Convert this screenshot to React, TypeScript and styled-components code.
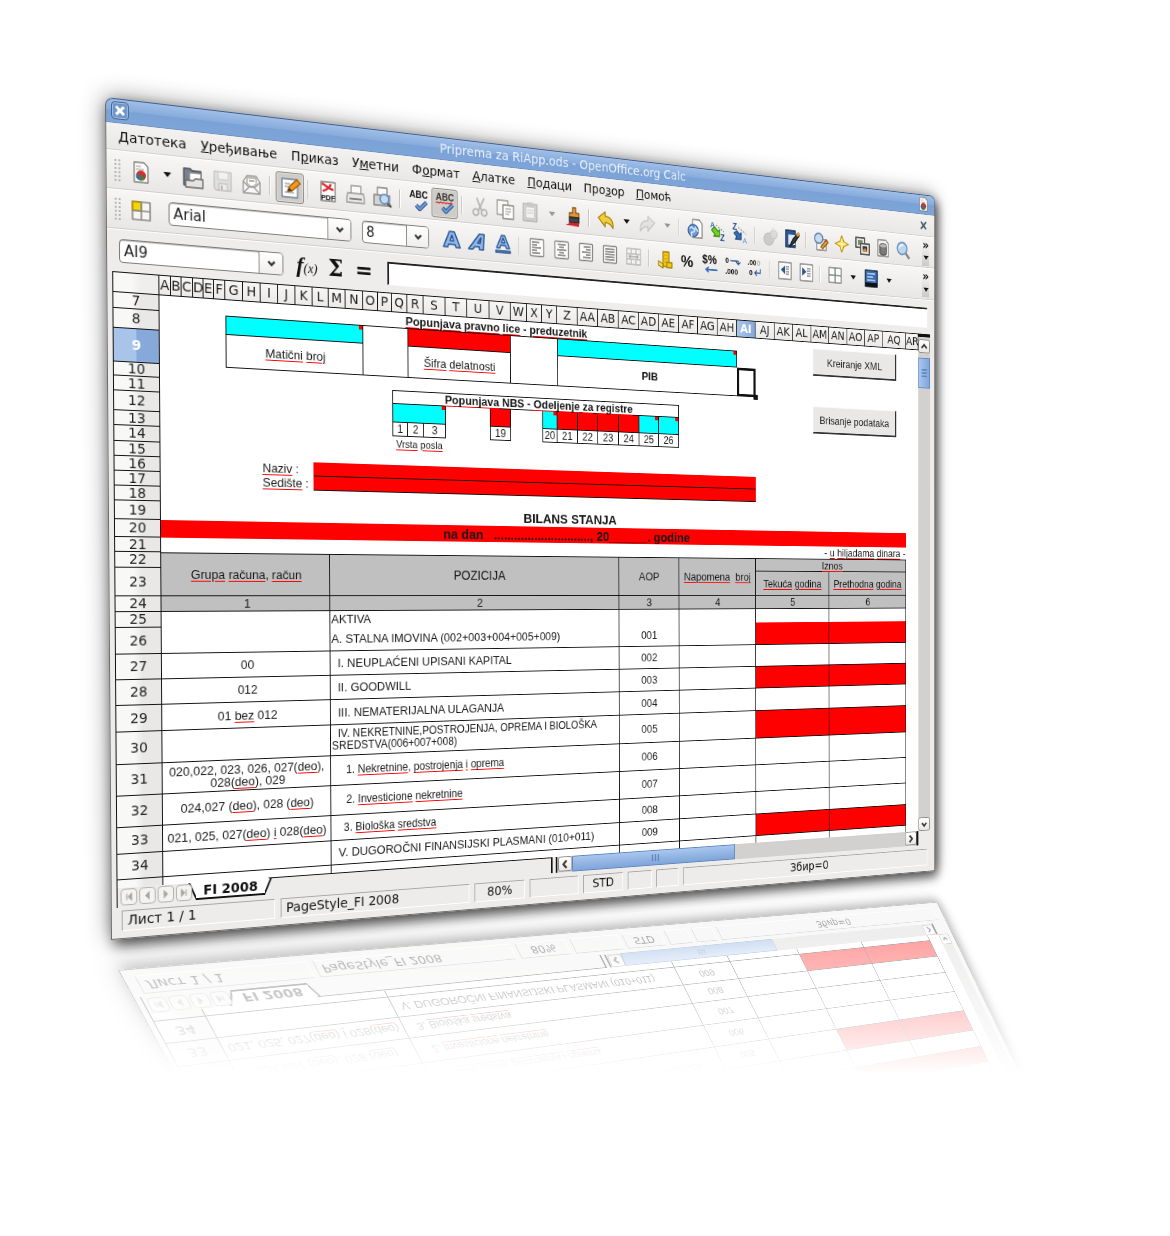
import React, { Fragment, ReactNode } from "react";
import styled, { createGlobalStyle, css } from "styled-components";

/* ---------- perspective ---------- */

type Point = [number, number];

const WINDOW_WIDTH = 1040;
const WINDOW_HEIGHT = 850;

/* Builds the matrix3d that carries a flat box to four corners (tl, tr, br, bl). */
function project(w: number, h: number, tl: Point, tr: Point, br: Point, bl: Point) {
  const sx = tl[0] - tr[0] + br[0] - bl[0];
  const sy = tl[1] - tr[1] + br[1] - bl[1];
  const dx1 = tr[0] - br[0];
  const dx2 = bl[0] - br[0];
  const dy1 = tr[1] - br[1];
  const dy2 = bl[1] - br[1];
  const den = dx1 * dy2 - dx2 * dy1;
  const g = (sx * dy2 - dx2 * sy) / den;
  const k = (dx1 * sy - sx * dy1) / den;
  const m = [
    (tr[0] - tl[0] + g * tr[0]) / w, (tr[1] - tl[1] + g * tr[1]) / w, 0, g / w,
    (bl[0] - tl[0] + k * bl[0]) / h, (bl[1] - tl[1] + k * bl[1]) / h, 0, k / h,
    0, 0, 1, 0,
    tl[0], tl[1], 0, 1,
  ];
  return `matrix3d(${m.map((n) => n.toFixed(9)).join(",")})`;
}

const FRONT = project(WINDOW_WIDTH, WINDOW_HEIGHT, [105, 97], [935, 196], [935, 871], [111, 940]);
const MIRROR = project(WINDOW_WIDTH, WINDOW_HEIGHT, [497, 1671], [1174, 1392], [937, 902], [118, 970]);

/* ---------- base ---------- */

const UI = `"DejaVu Sans", Verdana, sans-serif`;
const DOC = `"Liberation Sans", Arial, sans-serif`;

const Global = createGlobalStyle`
  *, *::before, *::after { box-sizing: border-box; }
  body { margin: 0; background: #fff; }
  button, input, select { font: inherit; color: inherit; margin: 0; }
`;

const Stage = styled.main`
  position: relative;
  min-height: 100vh;
  overflow: hidden;
  background: #fff;
`;

const ReflectionLayer = styled.div`
  position: absolute;
  inset: 0;
  overflow: hidden;
  pointer-events: none;
  mask-image: linear-gradient(to bottom, rgba(0, 0, 0, 0.36) 940px, rgba(0, 0, 0, 0.18) 1015px, transparent 1074px);
`;

const Frame = styled.section<{ $matrix: string; $mirrored?: boolean }>`
  position: relative;
  display: flex;
  flex-direction: column;
  justify-content: flex-end;
  width: ${WINDOW_WIDTH}px;
  min-height: ${WINDOW_HEIGHT}px;
  transform: ${(p) => p.$matrix};
  transform-origin: 0 0;
  overflow: ${(p) => (p.$mirrored ? "visible" : "hidden")};
  background: #edeceb;
  border-radius: 8px 8px 0 0;
  font-family: ${UI};
  font-size: 13px;
  color: #111;
  box-shadow: 0 0 24px rgba(0, 0, 0, 0.45), 4px 6px 14px rgba(0, 0, 0, 0.6);
  &::after {
    content: "";
    position: absolute;
    inset: 0;
    border: 1px solid #6d6a66;
    border-top-color: #3f5f8d;
    border-radius: 8px 8px 0 0;
    pointer-events: none;
  }
`;

/* ---------- title and menu ---------- */

const TitleBar = styled.header`
  display: grid;
  grid-template-columns: 24px 1fr 24px;
  align-items: center;
  height: 25px;
  padding: 0 4px 0 6px;
  background: linear-gradient(#a3c0e8, #86abdc 50%, #7ba2d6 52%, #7ea4d8);
  border-bottom: 1px solid #6f92c2;
`;

const TitleText = styled.h1`
  margin: 0;
  font-size: 14px;
  font-weight: 400;
  line-height: 16px;
  text-align: center;
  color: #e9f0fa;
`;

const PlainButton = styled.button`
  display: grid;
  place-items: center;
  padding: 0;
  border: 0;
  background: none;
`;

const CloseButton = styled(PlainButton)`
  width: 18px;
  height: 18px;
  border: 1px solid #45638f;
  border-radius: 4px;
  background: #6e94c8;
  box-shadow: inset 0 0 0 1px #a6c1e6;
`;

const MenuBar = styled.nav`
  display: flex;
  align-items: center;
  gap: 1px;
  height: 27px;
  padding: 0 8px 0 6px;
  background: linear-gradient(#f3f2f1, #e9e8e6);
  border-bottom: 1px solid #d2d0cd;
`;

const MenuItem = styled(PlainButton)`
  display: block;
  padding: 0 7px;
  font-size: 14px;
  line-height: 18px;
  color: #111;
`;

const Spacer = styled.span`
  flex: 1;
`;

/* ---------- toolbars ---------- */

const Toolbar = styled.div<{ $tall?: boolean }>`
  display: flex;
  align-items: center;
  height: ${(p) => (p.$tall ? 40 : 39)}px;
  padding-left: 8px;
  padding-right: 9px;
  background: linear-gradient(#f7f6f5, #e8e7e5);
  border-top: 1px solid #fff;
  border-bottom: 1px solid #cfcdca;
`;

const Grip = styled.span`
  width: 7px;
  height: 24px;
  margin-right: 5px;
  background-image: radial-gradient(#b9b6b2 1px, transparent 1px);
  background-size: 4px 4px;
`;

const ToolButton = styled(PlainButton)<{ $on?: boolean; $faded?: boolean }>`
  width: 31px;
  height: 32px;
  border-radius: 3px;
  opacity: ${(p) => (p.$faded ? 0.45 : 1)};
  ${(p) =>
    p.$on &&
    css`
      background: #cfccc8;
      border: 1px solid #8c8984;
      box-shadow: inset 0 0 0 1px #e0deda;
    `}
`;

const ArrowButton = styled(PlainButton)<{ $faded?: boolean }>`
  width: 23px;
  height: 24px;
  opacity: ${(p) => (p.$faded ? 0.4 : 1)};
`;

const Divider = styled.span`
  width: 2px;
  height: 20px;
  margin: 0 5px 0 4px;
  border-left: 1px solid #c4c1bd;
  border-right: 1px solid #fff;
`;

const Overflow = styled(PlainButton)`
  grid-template-rows: 16px 16px;
  width: 11px;
  height: 34px;
  font-size: 16px;
  font-weight: 700;
  line-height: 14px;
  background: linear-gradient(#f0efee 30%, #cbc9c5);
`;

const Combo = styled.div<{ $w: number; $gap: number }>`
  display: flex;
  width: ${(p) => p.$w}px;
  height: 24px;
  margin-left: ${(p) => p.$gap}px;
  border: 1px solid #7e7b77;
  border-radius: 4px;
  background: #fff;
  box-shadow: inset 0 1px 1px #bbb;
  overflow: hidden;
`;

const fieldCss = css`
  flex: 1;
  min-width: 0;
  padding: 0 4px;
  border: 0;
  outline: 0;
  background: transparent;
  font-size: 15px;
  line-height: 22px;
  color: #222;
`;

const ComboSelect = styled.select`
  ${fieldCss}
  appearance: none;
`;

const ComboInput = styled.input`
  ${fieldCss}
`;

const ComboArrow = styled.span`
  display: grid;
  place-items: center;
  width: 26px;
  border-left: 1px solid #8c8984;
  background: linear-gradient(#fff, #efeeec);
`;

const Group = styled.div`
  display: flex;
  align-items: center;
  margin-left: 11px;
`;

const FormulaBar = styled.div`
  display: flex;
  align-items: center;
  height: 43px;
  padding-right: 12px;
  background: #eeedec;
  border-top: 1px solid #fff;
`;

const FormulaActions = styled.div`
  display: flex;
  align-items: center;
  width: 117px;
  padding-left: 10px;
`;

const FormulaButton = styled(PlainButton)`
  width: 32px;
  height: 26px;
  font-family: "DejaVu Serif", serif;
  font-size: 24px;
  font-weight: 700;
  line-height: 24px;
  white-space: nowrap;
  em {
    font-family: "Liberation Serif", serif;
    font-size: 24px;
    line-height: 24px;
  }
  small {
    font-family: "Liberation Serif", serif;
    font-size: 14px;
    font-weight: 400;
    font-style: italic;
  }
`;

const FormulaInput = styled.input`
  ${fieldCss}
  height: 25px;
  border: 1px solid #fff;
  border-top: 2px solid #222;
  border-left: 2px solid #222;
  background: #fff;
`;

/* ---------- sheet ---------- */

const SheetArea = styled.div`
  display: flex;
  padding: 0 8px 0 6px;
`;

const SheetPane = styled.div`
  position: relative;
  flex: 1;
  min-width: 0;
  overflow: hidden;
  background: #fff;
`;

const Grid = styled.table`
  table-layout: fixed;
  width: 1008px;
  border-spacing: 0;
  font-family: ${DOC};
`;

const Row = styled.tr<{ $h: number }>`
  height: ${(p) => p.$h}px;
`;

const headCss = css<{ $on?: boolean }>`
  padding: 0;
  border: 0 solid #111;
  border-right-width: 1px;
  border-bottom-width: 1px;
  font-family: ${UI};
  font-size: 14px;
  font-weight: ${(p) => (p.$on ? 700 : 400)};
  line-height: 13px;
  text-align: center;
  color: ${(p) => (p.$on ? "#fff" : "#222")};
`;

const ColumnHead = styled.th<{ $on?: boolean }>`
  ${headCss}
  border-top: 1px solid #111;
  white-space: nowrap;
  background: ${(p) => (p.$on ? "linear-gradient(90deg, #a9c4ea, #86a9da)" : "linear-gradient(#f6f6f5, #eceae9)")};
`;

const Corner = styled.td`
  ${headCss}
  border-top: 1px solid #111;
  border-left: 1px solid #111;
  background: linear-gradient(90deg, #f8f8f7 40%, #efeeec 60%);
`;

const RowHead = styled.th<{ $on?: boolean; $open?: boolean }>`
  ${headCss}
  border-left-width: 1px;
  border-bottom-width: ${(p) => (p.$open ? 0 : 1)}px;
  background: ${(p) =>
    p.$on ? "linear-gradient(90deg, #a9c4ea 49%, #86a9da 51%)" : "linear-gradient(90deg, #f8f8f7 40%, #e9e8e6 60%)"};
`;

interface Look {
  fill?: string;
  sides?: string;
  bold?: boolean;
  size?: number;
  align?: "left" | "right";
  pad?: number;
  note?: boolean;
}

const Cell = styled.td<{ $look: Look }>`
  position: relative;
  padding: 0 1px 0 ${(p) => p.$look.pad ?? 1}px;
  border: 0 solid #111;
  ${(p) => (p.$look.sides?.includes("t") ? "border-top-width: 1px;" : "")}
  ${(p) => (p.$look.sides?.includes("r") ? "border-right-width: 1px;" : "")}
  ${(p) => (p.$look.sides?.includes("b") ? "border-bottom-width: 1px;" : "")}
  ${(p) => (p.$look.sides?.includes("l") ? "border-left-width: 1px;" : "")}
  background: ${(p) => p.$look.fill ?? "transparent"};
  font-size: ${(p) => p.$look.size ?? 13}px;
  font-weight: ${(p) => (p.$look.bold ? 700 : 400)};
  line-height: 13px;
  text-align: ${(p) => p.$look.align ?? "center"};
  white-space: pre;
  color: #181818;
  ${(p) =>
    p.$look.note &&
    css`
      &::after {
        content: "";
        position: absolute;
        top: 0;
        right: 0;
        width: 4px;
        height: 4px;
        background: #f00;
      }
    `}
`;

const CursorCell = styled.td`
  position: relative;
  padding: 0;
  border: 3px solid #111;
  &::after {
    content: "";
    position: absolute;
    right: -6px;
    bottom: -6px;
    width: 6px;
    height: 6px;
    background: #111;
  }
`;

const Misspelt = styled.span`
  text-decoration: underline 1px #f00;
  text-underline-offset: 2px;
`;

const SheetButton = styled.button<{ $top: number }>`
  position: absolute;
  top: ${(p) => p.$top}px;
  left: 849px;
  width: 125px;
  height: 33px;
  padding: 0;
  border: 1px solid #f8f8f8;
  border-right: 2px solid #333;
  border-bottom: 2px solid #333;
  background: #eae8e6;
  font-family: ${DOC};
  font-size: 13px;
  color: #222;
`;

/* ---------- scroll bars, tabs, status ---------- */

const VerticalScroll = styled.div`
  display: flex;
  flex-direction: column;
  width: 18px;
  padding-top: 3px;
  border-top: 4px solid #111;
  background: #d3d1cf;
`;

const ScrollButton = styled(PlainButton)`
  border: 1px solid #8c8984;
  border-radius: 3px;
  background: linear-gradient(#fff, #e9e8e6);
  width: 18px;
  height: 17px;
`;

const VerticalThumb = styled.span`
  display: grid;
  place-items: center;
  height: 38px;
  margin-top: 6px;
  border: 1px solid #5f86bf;
  background: linear-gradient(90deg, #a9c6ee, #7fa5da);
`;

const TabRow = styled.div`
  display: flex;
  height: 20px;
  padding: 0 26px 0 6px;
`;

const TabNav = styled.div`
  display: flex;
  gap: 2px;
  width: 78px;
  padding: 1px 0 0 3px;
  border-left: 1px solid #111;
`;

const TabNavButton = styled(PlainButton)`
  width: 17px;
  height: 17px;
  border: 1px solid #b3b0ac;
  border-radius: 4px;
  background: #f4f3f2;
`;

const SheetTab = styled.button`
  position: relative;
  width: 74px;
  height: 18px;
  margin: 0 4px;
  padding: 0;
  border: 0;
  border-bottom: 2px solid #111;
  background: #fff;
  font-size: 14px;
  font-weight: 700;
  line-height: 16px;
  &::before,
  &::after {
    content: "";
    position: absolute;
    z-index: -1;
    top: 0;
    bottom: -2px;
    width: 12px;
    background: #fff;
  }
  &::before {
    left: -4px;
    border-left: 2px solid #111;
    transform: skewX(24deg);
  }
  &::after {
    right: -4px;
    border-right: 2px solid #111;
    transform: skewX(-24deg);
  }
`;

const TabFiller = styled.span`
  flex: 1;
  height: 18px;
  border-top: 1px solid #111;
  border-right: 2px solid #111;
`;

const HorizontalScroll = styled.div`
  display: flex;
  width: 510px;
  height: 18px;
  margin-left: 4px;
  padding-left: 1px;
  border-left: 2px solid #111;
  border-right: 3px solid #111;
  background: #d3d1cf;
`;

const HorizontalThumb = styled.span`
  display: grid;
  place-items: center;
  width: 218px;
  border: 1px solid #5f86bf;
  background: linear-gradient(#a9c6ee, #7fa5da);
`;

const StatusBar = styled.footer`
  display: flex;
  gap: 6px;
  height: 32px;
  padding: 3px 12px 8px 11px;
`;

const StatusCell = styled.span<{ $w?: number; $center?: boolean }>`
  flex: ${(p) => (p.$w ? `0 0 ${p.$w}px` : "1")};
  padding: 0 5px;
  border: 1px solid #fff;
  border-top-color: #a9a6a2;
  border-left-color: #a9a6a2;
  font-size: 14px;
  line-height: 18px;
  text-align: ${(p) => (p.$center ? "center" : "left")};
  white-space: nowrap;
`;

/* ---------- drawings ---------- */

const Svg = ({ children, size = 24 }: { children: ReactNode; size?: number }) => (
  <svg width={size} height={size} viewBox="0 0 24 24" fill="none" strokeWidth="1.3" strokeLinejoin="round" aria-hidden="true">
    {children}
  </svg>
);

const page = <path d="M5 2h10l4 4v16H5z" fill="#fdfdfd" stroke="#85827e" />;

const lines = (rows: [number, number][]) => (
  <>
    <rect x="3.5" y="2.5" width="17" height="19" rx="1" fill="#fbfbfb" stroke="#85827e" />
    {rows.map(([from, to], i) => (
      <path key={i} d={`M${from} ${6 + i * 3}H${to}`} stroke="#55524e" strokeWidth="1.2" />
    ))}
  </>
);

const check = <path d="M9 17l4 4 8-8" stroke="#284f86" strokeWidth="4.4" />;
const checkInner = <path d="M9 17l4 4 8-8" stroke="#6d9bdb" strokeWidth="2.4" />;

const Small = ({ x, y, size = 10, fill = "#111", children }: { x: number; y: number; size?: number; fill?: string; children: string }) => (
  <text x={x} y={y} fontSize={size} fontWeight="700" fontFamily="Liberation Sans, sans-serif" fill={fill}>
    {children}
  </text>
);

const icons: Record<string, ReactNode> = {
  newDoc: <>{page}<path d="M7 6h5M7 9h8" stroke="#bbb" /><circle cx="12" cy="15" r="5" fill="#c8362a" /><path d="M12 15l-5-1a5 5 0 0 0 3 6z" fill="#3c6c9f" /><path d="M12 15l-2 5a5 5 0 0 0 6-2z" fill="#3f7d45" /></>,
  open: <><path d="M2 20V3h7l2 2h9v15z" fill="#7a818c" stroke="#4a4f58" /><path d="M8 7h12v9H8z" fill="#fff" stroke="#888" /><path d="M4 22v-7h8l2-2h8v9z" fill="#e4e3e1" stroke="#6b6965" /></>,
  save: <><path d="M3 3h18v19H5l-2-2z" fill="#cfd0d3" stroke="#8c8f94" /><path d="M7 3h11v8H7z" fill="#f4f4f4" stroke="#aaa" /><path d="M8 15h9v7H8z" fill="#eee" stroke="#999" /><path d="M10 17h2v4h-2z" fill="#777" /></>,
  mail: <><path d="M3 10l4-6h10l4 6v12H3z" fill="#f8f8f7" stroke="#9b9894" /><path d="M7 12V6h10v6l-5 4z" fill="#fff" stroke="#aaa7a3" /><path d="M3 22l7-7h4l7 7M3 10l6 6M21 10l-6 6M9 9h6" stroke="#9b9894" /></>,
  edit: <><path d="M3 3h17v19H3z" fill="#fcfcfc" stroke="#6f8296" /><path d="M6 8h6M6 11h5M6 17h10" stroke="#a8a8a8" /><path d="M9 16l2-5 8-8 4 4-9 8z" fill="#f39a1e" stroke="#a65a00" /><path d="M9 16l2-4 3 3z" fill="#333" /></>,
  pdf: <><path d="M4 2h16v20H4z" fill="#fbfbfb" stroke="#85827e" /><path d="M5 4c4 1 8 5 13 6M15 4c-1 4-4 6-9 8" stroke="#e3262d" strokeWidth="2.4" /><Small x={4} y={21} size={8}>PDF</Small></>,
  print: <><path d="M7 3h11v9H7z" fill="#fafafa" stroke="#9b9894" /><path d="M3 11h18l1 5v5H2v-5z" fill="#e8e7e5" stroke="#9b9894" /><path d="M5 17h14" stroke="#85827e" strokeWidth="2" /></>,
  preview: <><path d="M6 2h11v9H6z" fill="#fafafa" stroke="#85827e" /><path d="M2 10h18v11H2z" fill="#d5d4d2" stroke="#85827e" /><path d="M17 18l5 4" stroke="#555" strokeWidth="2.6" /><circle cx="14" cy="14" r="5" fill="#c7dcf3" stroke="#6a93c7" strokeWidth="2" /></>,
  spell: <><Small x={1} y={9} size={10}>ABC</Small>{check}{checkInner}</>,
  autoSpell: <><Small x={1} y={9} size={10} fill="#333">ABC</Small><path d="M1 12l2-1 2 1 2-1 2 1 2-1 2 1 2-1 2 1 2-1 2 1" stroke="#e02020" />{check}{checkInner}</>,
  cut: <><path d="M8 2l6 14M17 2l-7 14" stroke="#77746f" strokeWidth="2" /><circle cx="7" cy="18" r="3.4" stroke="#77746f" strokeWidth="2" /><circle cx="17" cy="18" r="3.4" stroke="#77746f" strokeWidth="2" /></>,
  copy: <><path d="M2 2h13v16H2z" fill="#f7f7f6" stroke="#9b9894" /><path d="M9 7h13v15H9z" fill="#fdfdfd" stroke="#85827e" /><path d="M12 11h7M12 14h7M12 17h5" stroke="#b5b2ae" /></>,
  paste: <><path d="M3 3h17v19H3z" fill="#b5b1aa" stroke="#77746f" /><path d="M6 6h11v13H6z" fill="#fafafa" stroke="#999" /><path d="M8 1h7v5H8z" fill="#999" /><path d="M8 10h7M8 13h7" stroke="#bbb" /></>,
  brush: <><path d="M11 2h4v6h4v5H7V8h4z" fill="#e0973c" stroke="#87521a" /><path d="M7 13h12v6H7z" fill="#444" stroke="#222" /><path d="M2 22c4-1 5-3 7-3h10v4z" fill="#d6222a" /></>,
  undo: <path d="M2 10l9-7v5c7 0 11 5 10 13-2-4-5-6-10-6v5z" fill="#f2cd3c" stroke="#a5820a" />,
  redo: <path d="M22 10l-9-7v5C6 8 2 13 3 21c2-4 5-6 10-6v5z" fill="#d4d3d1" stroke="#989591" />,
  link: <><path d="M8 1h9l4 4v17H8z" fill="#fbfbfb" stroke="#85827e" /><circle cx="9" cy="14" r="7" fill="#6b9ad6" stroke="#315d99" /><path d="M4 12c3-4 4 0 6 0s1 4-2 4-1 3-1 5M12 9c-1 3 3 3 3 6" stroke="#d7e6f7" strokeWidth="1.8" /></>,
  sortAZ: <><Small x={1} y={8} size={9} fill="#3264a8">A</Small><Small x={15} y={23} size={10} fill="#234f91">Z</Small><path d="M9 5l11 7" stroke="#888" strokeDasharray="2 2" /><path d="M3 11l5 5-2 2h8v-8l-2 2-5-5z" fill="#6fd22c" stroke="#2f8205" /></>,
  sortZA: <><Small x={1} y={8} size={10} fill="#234f91">Z</Small><Small x={15} y={23} size={9} fill="#7aa3db">A</Small><path d="M9 5l11 7" stroke="#888" strokeDasharray="2 2" /><path d="M3 12l4 4-2 3h8v-8l-2 2-4-4z" fill="#3b6fb5" stroke="#1f4a86" /></>,
  chart: <><circle cx="10" cy="15" r="7" fill="#a7a5a1" stroke="#888" /><circle cx="17" cy="9" r="5" fill="#c4c2be" stroke="#999" /><circle cx="16" cy="3" r="2" fill="#d2d0cd" /></>,
  draw: <><path d="M3 2h14v20H3z" fill="#2d568f" stroke="#17325a" /><path d="M7 7h10v12H7z" fill="#dfe8f4" /><path d="M9 21l4-8 7-8 3 2-7 9z" fill="#3b3b3b" stroke="#111" /><path d="M18 7l3-4 3 2-3 4z" fill="#e09a3c" /></>,
  find: <><path d="M6 9h14v13H6z" fill="#f4f4f3" stroke="#85827e" /><circle cx="9" cy="8" r="6" fill="#c7dcf3" stroke="#6a86a8" strokeWidth="1.8" /><path d="M12 18l8-9 3 3-8 8z" fill="#e79c38" stroke="#8c5510" /></>,
  navigator: <><path d="M12 2l3 7 7 3-7 3-3 7-3-7-7-3 7-3z" fill="#f8dd58" stroke="#b98f0a" /><path d="M12 6v12M6 12h12" stroke="#fff6c4" /></>,
  gallery: <><path d="M2 2h13v12H2z" fill="#e8e7e4" stroke="#5c5a57" strokeWidth="2" /><path d="M5 5h7v6H5z" fill="#7b8e6b" /><path d="M9 9h13v13H9z" fill="#e8e7e4" stroke="#5c5a57" strokeWidth="2" /><path d="M12 12h7v7h-7z" fill="#3a3933" /><path d="M12 17l4-3 3 5h-7z" fill="#d0913f" /></>,
  database: <><path d="M4 2h12l4 4v16H4z" fill="#f1f1f0" stroke="#85827e" /><path d="M7 9c0-3 10-3 10 0v9c0 3-10 3-10 0z" fill="#7c7a77" stroke="#4e4c4a" /><ellipse cx="12" cy="9" rx="5" ry="2" fill="#b9b7b4" /></>,
  zoom: <><path d="M15 15l6 7" stroke="#8a8783" strokeWidth="3.4" /><circle cx="10" cy="10" r="7.5" fill="#bcd6f2" stroke="#7396be" strokeWidth="2" /><path d="M6 9c1-3 4-4 6-3" stroke="#fff" strokeWidth="1.6" /></>,
  styles: <><path d="M3 3h18v18H3z" fill="#f6f6f5" stroke="#8f8c88" strokeWidth="1.6" /><path d="M3 3h9v9H3z" fill="#f4d40c" stroke="#a88c00" strokeWidth="1.6" /><path d="M12 3v18M3 12h18" stroke="#8f8c88" strokeWidth="1.6" /></>,
  bold: <path d="M2 20L9 3h6l7 17h-5l-1-3H8l-1 3zM10 13h4l-2-6z" fill="#8fb6e8" stroke="#2b5590" strokeWidth="1.6" />,
  italic: <path d="M1 20L14 3h6l-1 17h-5v-3H9l-3 3zM12 13h3l1-6z" fill="#8fb6e8" stroke="#2b5590" strokeWidth="1.6" />,
  underline: <><path d="M4 16L10 2h4l6 14h-4l-1-3H9l-1 3zM10 10h4l-2-5z" fill="#8fb6e8" stroke="#2b5590" strokeWidth="1.4" /><path d="M3 19h18v2H3z" fill="#8fb6e8" stroke="#2b5590" /></>,
  left: lines([[6, 15], [6, 12], [6, 17], [6, 12], [6, 16]]),
  center: lines([[7, 17], [9, 15], [6, 18], [9, 15], [7, 17]]),
  right: lines([[9, 18], [12, 18], [7, 18], [12, 18], [8, 18]]),
  justify: lines([[6, 18], [6, 18], [6, 18], [6, 18], [6, 18]]),
  merge: <><path d="M3 3h18v18H3zM3 9h18M3 15h18M9 3v6M15 3v6M9 15v6M15 15v6" fill="#f8f8f8" stroke="#77746f" /><path d="M6 12h12M8 10l-2 2 2 2M16 10l2 2-2 2" stroke="#555" /></>,
  currency: <><path d="M9 3h8v17H9z" fill="#f2c81e" stroke="#a37f00" /><path d="M9 7h8M9 11h8M9 15h8" stroke="#d6ac0e" /><path d="M3 14l6 3v5l-6-3z" fill="#f7dc5a" stroke="#a37f00" /><path d="M14 15h7v6h-7z" fill="#f2c81e" stroke="#a37f00" /></>,
  percent: <Small x={2} y={18} size={19}>%</Small>,
  standard: <><Small x={0} y={12} size={14}>$%</Small><path d="M21 19H5M9 16l-4 3 4 3" stroke="#3b6fb5" strokeWidth="1.8" /></>,
  addDecimal: <><Small x={1} y={9} size={9}>0</Small><path d="M8 6h11v3M16 7l3 3 3-3" stroke="#2b5590" /><Small x={1} y={22} size={9}>.000</Small></>,
  delDecimal: <><Small x={1} y={9} size={9}>.00</Small><Small x={14} y={9} size={9} fill="#aaa">0</Small><Small x={3} y={21} size={9}>0</Small><path d="M19 13v5h-8M14 15l-3 3 3 3" stroke="#2b5590" /></>,
  outdent: <><path d="M3 2h18v20H3z" fill="#fbfbfb" stroke="#85827e" /><path d="M12 6v10l-6-5z" fill="#2b5590" /><path d="M13 7h5M13 10h5M13 13h5M13 16h5" stroke="#888" /></>,
  indent: <><path d="M3 2h18v20H3z" fill="#fbfbfb" stroke="#85827e" /><path d="M6 6v10l6-5z" fill="#2b5590" /><path d="M13 7h5M13 10h5M13 13h5M13 16h5" stroke="#888" /></>,
  borders: <><path d="M3 3h18v18H3z" fill="#fbfbfb" stroke="#85827e" /><path d="M3 12h18M12 3v18" stroke="#6f8a6f" strokeWidth="1.6" /></>,
  fillColor: <><path d="M3 2h18v20H3z" fill="#3b6fb5" stroke="#1d2f4a" strokeWidth="1.6" /><path d="M6 6h12M6 10h9M6 14h12" stroke="#cfe0f5" strokeWidth="1.6" /><path d="M3 17h18v5H3z" fill="#111" /></>,
};

const Chevron = ({ d = "M6 9l6 6 6-6" }: { d?: string }) => (
  <svg width="14" height="14" viewBox="0 0 24 24" fill="none" stroke="#333" strokeWidth="4" aria-hidden="true">
    <path d={d} />
  </svg>
);

const Triangle = () => (
  <svg width="8" height="5" viewBox="0 0 8 5" aria-hidden="true">
    <path d="M0 0h8L4 5z" fill="#111" />
  </svg>
);

/* ---------- data ---------- */

const MENU: [string, string, string][] = [
  ["", "Д", "атотека"], ["", "У", "ређивање"], ["П", "р", "иказ"], ["У", "м", "етни"], ["Ф", "о", "рмат"],
  ["", "А", "латке"], ["", "П", "одаци"], ["Про", "з", "ор"], ["", "П", "омоћ"],
];

type Tool = string | { icon: string; on?: boolean; faded?: boolean };

const STANDARD_TOOLS: Tool[] = [
  "newDoc", "v", "open", { icon: "save", faded: true }, "mail", "|", { icon: "edit", on: true }, "|", "pdf", "print", "preview", "|",
  "spell", { icon: "autoSpell", on: true }, "|", { icon: "cut", faded: true }, "copy", { icon: "paste", faded: true }, "v-", "brush", "|",
  "undo", "v", { icon: "redo", faded: true }, "v-", "|", "link", "sortAZ", "sortZA", "|", { icon: "chart", faded: true }, "draw", "|",
  "find", "navigator", "gallery", "database", "zoom",
];

const FORMAT_TOOLS: Tool[] = [
  "bold", "italic", "underline", "|", "left", "center", "right", "justify", { icon: "merge", faded: true }, "|",
  "currency", "percent", "standard", "addDecimal", "delDecimal", "|", "outdent", "indent", "|", "borders", "v", "fillColor", "v",
];

const COLUMNS: [string, number][] = [
  ["A", 12], ["B", 11], ["C", 12], ["D", 11], ["E", 11], ["F", 12], ["G", 19], ["H", 19], ["I", 19], ["J", 19], ["K", 19],
  ["L", 18], ["M", 19], ["N", 20], ["O", 17], ["P", 16], ["Q", 18], ["R", 19], ["S", 26], ["T", 26], ["U", 27], ["V", 26],
  ["W", 20], ["X", 19], ["Y", 19], ["Z", 26], ["AA", 26], ["AB", 27], ["AC", 27], ["AD", 26], ["AE", 27], ["AF", 26],
  ["AG", 27], ["AH", 27], ["AI", 26], ["AJ", 27], ["AK", 26], ["AL", 27], ["AM", 26], ["AN", 27], ["AO", 26], ["AP", 27],
  ["AQ", 36], ["AR", 19],
];

interface CellData extends Look {
  at: number;
  span: number;
  text?: string;
  rows?: number;
  cursor?: boolean;
  covered?: boolean;
}

interface RowData {
  n: string;
  h: number;
  cells?: CellData[];
}

const CYAN = "#00ffff";
const RED = "#ff0000";
const GREY = "#c0c0c0";

const at = (start: number, span: number, text = "", look: Partial<CellData> = {}): CellData => ({ at: start, span, text, ...look });

/* The six columns of the balance table, as spans of sheet columns. */
const entry = (group: string, item: string, code: string, red = false, pad = 8, size = 13): CellData[] => [
  at(0, 12, group, { sides: "rb" }),
  at(12, 16, item, { sides: "rb", align: "left", pad, size }),
  at(28, 3, code, { sides: "rb" }),
  at(31, 4, "", { sides: "rb" }),
  at(35, 4, "", { sides: "rb", fill: red ? RED : undefined }),
  at(39, 4, "", { sides: "rb", fill: red ? RED : undefined }),
];

const ROWS: RowData[] = [
  { n: "7", h: 16, cells: [at(6, 28, "~Popunjava~ ~pravno~ ~lice~ - ~preduzetnik~", { bold: true })] },
  {
    n: "8", h: 20, cells: [
      at(6, 8, "", { fill: CYAN, sides: "tlrb", note: true }), at(14, 3, "", { sides: "t" }),
      at(17, 5, "", { fill: RED, sides: "tlrb" }), at(22, 3, "", { sides: "t" }),
      at(25, 9, "", { fill: CYAN, sides: "tlrb", note: true }),
    ],
  },
  {
    n: "9", h: 34, cells: [
      at(6, 8, "~Matični~ ~broj~", { sides: "lrb" }), at(14, 3, "", { sides: "b" }),
      at(17, 5, "~Šifra~ ~delatnosti~", { sides: "lrb" }), at(22, 3, "", { sides: "b" }),
      at(25, 9, "PIB", { sides: "lb", bold: true }), at(34, 1, "", { cursor: true }),
    ],
  },
  { n: "10", h: 14 },
  { n: "11", h: 15, cells: [at(16, 15, "~Popunjava~ NBS - ~Odeljenje~ ~za~ ~registre~", { sides: "tlrb", bold: true })] },
  {
    n: "12", h: 20, cells: [
      at(16, 3, "", { fill: CYAN, sides: "lrb", note: true }), at(21, 1, "", { fill: RED, sides: "lrb" }),
      at(24, 1, "", { fill: CYAN, sides: "lrb", note: true }), at(25, 1, "", { fill: RED, sides: "rb" }),
      at(26, 1, "", { fill: RED, sides: "rb" }), at(27, 1, "", { fill: RED, sides: "rb" }), at(28, 1, "", { fill: RED, sides: "rb" }),
      at(29, 1, "", { fill: CYAN, sides: "rb", note: true }), at(30, 1, "", { fill: CYAN, sides: "rb", note: true }),
    ],
  },
  {
    n: "13", h: 15, cells: [
      at(16, 1, "1", { sides: "lrb", size: 12 }), at(17, 1, "2", { sides: "rb", size: 12 }), at(18, 1, "3", { sides: "rb", size: 12 }),
      at(21, 1, "19", { sides: "lrb", size: 12 }), at(24, 1, "20", { sides: "lrb", size: 12 }), at(25, 1, "21", { sides: "rb", size: 12 }),
      at(26, 1, "22", { sides: "rb", size: 12 }), at(27, 1, "23", { sides: "rb", size: 12 }), at(28, 1, "24", { sides: "rb", size: 12 }),
      at(29, 1, "25", { sides: "rb", size: 12 }), at(30, 1, "26", { sides: "rb", size: 12 }),
    ],
  },
  { n: "14", h: 16, cells: [at(16, 3, "~Vrsta~ ~posla~", { size: 11 })] },
  { n: "15", h: 15 },
  { n: "16", h: 15, cells: [at(8, 3, "~Naziv~ :", { align: "left" }), at(11, 24, "", { fill: RED, sides: "b" })] },
  { n: "17", h: 15, cells: [at(8, 3, "~Sedište~ :", { align: "left" }), at(11, 24, "", { fill: RED, sides: "b" })] },
  { n: "18", h: 15 },
  { n: "19", h: 19, cells: [at(0, 43, "BILANS STANJA", { bold: true, size: 15 })] },
  { n: "20", h: 18, cells: [at(0, 43, "na dan   ............................., 20______. godine", { bold: true, size: 15, fill: RED })] },
  { n: "21", h: 15, cells: [at(31, 12, "- ~u~ ~hiljadama~ ~dinara~ -", { align: "right" })] },
  {
    n: "22", h: 16, cells: [
      at(0, 12, "~Grupa~ ~računa~, ~račun~", { rows: 2, fill: GREY, sides: "trb" }),
      at(12, 16, "POZICIJA", { rows: 2, fill: GREY, sides: "trb", size: 14 }),
      at(28, 3, "AOP", { rows: 2, fill: GREY, sides: "trb" }),
      at(31, 4, "~Napomena~  ~broj~", { rows: 2, fill: GREY, sides: "trb" }),
      at(35, 8, "~Iznos~", { fill: GREY, sides: "trb" }),
    ],
  },
  {
    n: "23", h: 29, cells: [
      at(0, 35, "", { covered: true }),
      at(35, 4, "~Tekuća~ ~godina~", { fill: GREY, sides: "rb" }),
      at(39, 4, "~Prethodna~ ~godina~", { fill: GREY, sides: "rb" }),
    ],
  },
  {
    n: "24", h: 16, cells: [[0, 12], [12, 16], [28, 3], [31, 4], [35, 4], [39, 4]].map(([s, w], i) =>
      at(s, w, String(i + 1), { fill: GREY, sides: "rb" })),
  },
  {
    n: "25", h: 16, cells: [
      at(0, 12, "", { sides: "r" }), at(12, 16, "AKTIVA", { sides: "r", align: "left" }), at(28, 3, "", { sides: "r" }),
      at(31, 4, "", { sides: "r" }), at(35, 4, "", { sides: "r" }), at(39, 4, "", { sides: "r" }),
    ],
  },
  { n: "26", h: 27, cells: entry("", "A. STALNA IMOVINA (002+003+004+005+009)", "001", true, 1) },
  { n: "27", h: 26, cells: entry("00", "I. NEUPLAĆENI UPISANI KAPITAL", "002") },
  { n: "28", h: 26, cells: entry("012", "II. GOODWILL", "003", true) },
  { n: "29", h: 27, cells: entry("01 ~bez~ 012", "III. NEMATERIJALNA ULAGANJA", "004") },
  { n: "30", h: 33, cells: entry("", "  IV. NEKRETNINE,POSTROJENJA, OPREMA I BIOLOŠKA\nSREDSTVA(006+007+008)", "005", true, 1, 12) },
  { n: "31", h: 32, cells: entry("020,022, 023, 026, 027(~deo~),\n028(~deo~), 029", "1. ~Nekretnine~, ~postrojenja~ ~i~ ~oprema~", "006", false, 17, 12) },
  { n: "32", h: 32, cells: entry("024,027 (~deo~), 028 (~deo~)", "2. ~Investicione~ ~nekretnine~", "007", false, 17, 12) },
  { n: "33", h: 27, cells: entry("021, 025, 027(~deo~) ~i~ 028(~deo~)", "3. ~Biološka~ ~sredstva~", "008", false, 14, 12) },
  { n: "34", h: 26, cells: entry("", "V. DUGOROČNI FINANSIJSKI PLASMANI (010+011)", "009", true) },
  { n: "", h: 8, cells: entry("", "", "").map((c) => ({ ...c, sides: "r" })) },
];

/* ---------- parts ---------- */

const spell = (text: string) =>
  text.split("~").map((part, i) => (i % 2 ? <Misspelt key={i}>{part}</Misspelt> : <Fragment key={i}>{part}</Fragment>));

function Tools({ items }: { items: Tool[] }) {
  return (
    <>
      {items.map((item, i) => {
        if (item === "|") return <Divider key={i} />;
        if (item === "v" || item === "v-")
          return <ArrowButton key={i} type="button" aria-label="more" $faded={item === "v-"}><Triangle /></ArrowButton>;
        const tool = typeof item === "string" ? { icon: item } : item;
        return (
          <ToolButton key={i} type="button" aria-label={tool.icon} $on={tool.on} $faded={tool.faded}>
            <Svg>{icons[tool.icon]}</Svg>
          </ToolButton>
        );
      })}
    </>
  );
}

function SheetRow({ row }: { row: RowData }) {
  const out: ReactNode[] = [];
  let pos = 0;
  for (const c of row.cells ?? []) {
    if (c.at > pos) out.push(<td key={`gap${pos}`} colSpan={c.at - pos} />);
    if (c.cursor) out.push(<CursorCell key={c.at} colSpan={c.span} />);
    else if (!c.covered)
      out.push(
        <Cell key={c.at} colSpan={c.span} rowSpan={c.rows} $look={c}>
          {spell(c.text ?? "")}
        </Cell>
      );
    pos = c.at + c.span;
  }
  if (pos < COLUMNS.length) out.push(<td key="tail" colSpan={COLUMNS.length - pos} />);
  return (
    <Row $h={row.h}>
      <RowHead scope="row" $on={row.n === "9"} $open={!row.n}>{row.n}</RowHead>
      {out}
    </Row>
  );
}

function Sheet({ rows, headed }: { rows: RowData[]; headed?: boolean }) {
  return (
    <Grid>
      <colgroup>
        <col width={48} />
        {COLUMNS.map(([name, w]) => <col key={name} width={w} />)}
      </colgroup>
      {headed && (
        <thead>
          <Row $h={21}>
            <Corner />
            {COLUMNS.map(([name]) => <ColumnHead key={name} scope="col" $on={name === "AI"}>{name}</ColumnHead>)}
          </Row>
        </thead>
      )}
      <tbody>
        {rows.map((row, i) => <SheetRow key={i} row={row} />)}
      </tbody>
    </Grid>
  );
}

const NAV_PATHS = ["M8 6v12M17 6l-6 6 6 6z", "M15 6l-6 6 6 6z", "M9 6l6 6-6 6z", "M7 6l6 6-6 6zM16 6v12"];

function WindowFoot() {
  return (
    <>
      <TabRow>
        <TabNav>
          {NAV_PATHS.map((d) => (
            <TabNavButton key={d} type="button" aria-label="sheet">
              <svg width="13" height="13" viewBox="0 0 24 24" fill="#aaa7a3" stroke="#aaa7a3" strokeWidth="2" aria-hidden="true"><path d={d} /></svg>
            </TabNavButton>
          ))}
        </TabNav>
        <SheetTab type="button">FI 2008</SheetTab>
        <TabFiller />
        <HorizontalScroll>
          <ScrollButton type="button" aria-label="left"><Chevron d="M15 5l-7 7 7 7" /></ScrollButton>
          <HorizontalThumb>
            <svg width="10" height="8" viewBox="0 0 10 8" stroke="#345a92" aria-hidden="true"><path d="M1 0v8M5 0v8M9 0v8" /></svg>
          </HorizontalThumb>
          <Spacer />
          <ScrollButton type="button" aria-label="right"><Chevron d="M9 5l7 7-7 7" /></ScrollButton>
        </HorizontalScroll>
      </TabRow>
      <StatusBar>
        <StatusCell $w={162}>Лист 1 / 1</StatusCell>
        <StatusCell $w={218}>PageStyle_FI 2008</StatusCell>
        <StatusCell $w={62} $center>80%</StatusCell>
        <StatusCell $w={62} />
        <StatusCell $w={52} $center>STD</StatusCell>
        <StatusCell $w={32} />
        <StatusCell $w={30} />
        <StatusCell $center>Збир=0</StatusCell>
      </StatusBar>
    </>
  );
}

function CalcWindow() {
  return (
    <Frame $matrix={FRONT}>
      <TitleBar>
        <CloseButton type="button" aria-label="close">
          <svg width="12" height="12" viewBox="0 0 12 12" stroke="#fff" strokeWidth="3" aria-hidden="true"><path d="M2 2l8 8M10 2l-8 8" /></svg>
        </CloseButton>
        <TitleText>Priprema za RiApp.ods - OpenOffice.org Calc</TitleText>
        <Svg size={20}>{icons.newDoc}</Svg>
      </TitleBar>
      <MenuBar>
        {MENU.map(([before, key, after]) => (
          <MenuItem key={before + key + after} type="button">{before}<u>{key}</u>{after}</MenuItem>
        ))}
        <Spacer />
        <PlainButton type="button" aria-label="close document">
          <svg width="18" height="14" viewBox="0 0 18 14" stroke="#4d5f73" strokeWidth="2.4" aria-hidden="true"><path d="M4 3l8 9M12 3l-8 9" /></svg>
        </PlainButton>
      </MenuBar>
      <Toolbar>
        <Grip />
        <Tools items={STANDARD_TOOLS} />
        <Spacer />
        <Overflow type="button">»<Triangle /></Overflow>
      </Toolbar>
      <Toolbar $tall>
        <Grip />
        <Tools items={["styles"]} />
        <Combo $w={198} $gap={13}>
          <ComboSelect aria-label="font" defaultValue="Arial"><option>Arial</option></ComboSelect>
          <ComboArrow><Chevron /></ComboArrow>
        </Combo>
        <Combo $w={78} $gap={12}>
          <ComboSelect aria-label="size" defaultValue="8"><option>8</option></ComboSelect>
          <ComboArrow><Chevron /></ComboArrow>
        </Combo>
        <Group><Tools items={FORMAT_TOOLS} /></Group>
        <Spacer />
        <Overflow type="button">»<Triangle /></Overflow>
      </Toolbar>
      <FormulaBar>
        <Combo $w={173} $gap={13}>
          <ComboInput aria-label="cell" defaultValue="AI9" />
          <ComboArrow><Chevron /></ComboArrow>
        </Combo>
        <FormulaActions>
          <FormulaButton type="button"><span><em>f</em><small>(x)</small></span></FormulaButton>
          <FormulaButton type="button">Σ</FormulaButton>
          <FormulaButton type="button">=</FormulaButton>
        </FormulaActions>
        <FormulaInput aria-label="formula" />
      </FormulaBar>
      <SheetArea>
        <SheetPane>
          <Sheet rows={ROWS} headed />
          <SheetButton type="button" $top={28}>Kreiranje XML</SheetButton>
          <SheetButton type="button" $top={98}>Brisanje podataka</SheetButton>
        </SheetPane>
        <VerticalScroll>
          <ScrollButton type="button" aria-label="up"><Chevron d="M5 15l7-7 7 7" /></ScrollButton>
          <VerticalThumb>
            <svg width="8" height="10" viewBox="0 0 8 10" stroke="#345a92" aria-hidden="true"><path d="M0 1h8M0 5h8M0 9h8" /></svg>
          </VerticalThumb>
          <Spacer />
          <ScrollButton type="button" aria-label="down"><Chevron /></ScrollButton>
        </VerticalScroll>
      </SheetArea>
      <WindowFoot />
    </Frame>
  );
}

/* Only the foot of the window reaches the visible part of the reflection. */
function Reflection() {
  return (
    <ReflectionLayer aria-hidden="true" inert>
      <Frame $matrix={MIRROR} $mirrored>
        <SheetArea>
          <SheetPane><Sheet rows={ROWS.slice(19)} /></SheetPane>
          <VerticalScroll>
            <Spacer />
            <ScrollButton type="button"><Chevron /></ScrollButton>
          </VerticalScroll>
        </SheetArea>
        <WindowFoot />
      </Frame>
    </ReflectionLayer>
  );
}

export default function App() {
  return (
    <Stage>
      <Global />
      <Reflection />
      <CalcWindow />
    </Stage>
  );
}
